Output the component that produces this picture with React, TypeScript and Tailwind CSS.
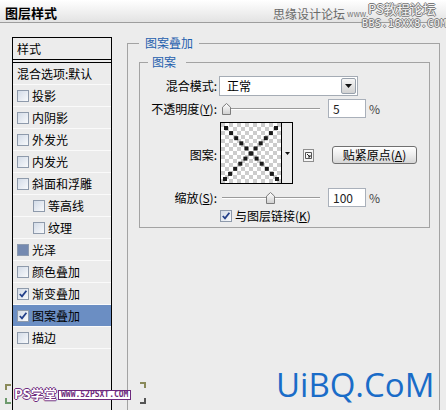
import React from 'react'

type CheckState = 'off' | 'on' | 'dark'

function Check({ state }: { state: CheckState }) {
  if (state === 'dark') {
    return <span className="block w-[12px] h-[12px] shrink-0 border border-[#8d9bb0] bg-[#7489b0]" />
  }
  return (
    <span className="relative block w-[12px] h-[12px] shrink-0 border border-[#8e9aab] bg-linear-to-br from-[#d3dce8] to-[#f8f9fb]">
      {state === 'on' && (
        <svg className="absolute left-0 top-0" width="10" height="10" viewBox="0 0 10 10">
          <path d="M1.8 5 L4 7.4 L8.4 1.8" fill="none" stroke="#23408a" strokeWidth="1.8" />
        </svg>
      )}
    </span>
  )
}

const styles: { label: string; state: CheckState; indent?: boolean; selected?: boolean }[] = [
  { label: '投影', state: 'off' },
  { label: '内阴影', state: 'off' },
  { label: '外发光', state: 'off' },
  { label: '内发光', state: 'off' },
  { label: '斜面和浮雕', state: 'off' },
  { label: '等高线', state: 'off', indent: true },
  { label: '纹理', state: 'off', indent: true },
  { label: '光泽', state: 'dark' },
  { label: '颜色叠加', state: 'off' },
  { label: '渐变叠加', state: 'on' },
  { label: '图案叠加', state: 'on', selected: true },
  { label: '描边', state: 'off' },
]

function Slider({ thumb }: { thumb: string }) {
  return (
    <div className="relative ml-[5px] w-[98px] h-[19px] shrink-0">
      <div className="absolute left-0 right-0 top-[9px] h-[2px] border-t border-[#9a9a9a] bg-white" />
      <svg className={`absolute top-[4px] ${thumb}`} width="9" height="12" viewBox="0 0 9 12">
        <defs>
          <linearGradient id="th" x1="0" y1="0" x2="0" y2="1">
            <stop offset="0" stopColor="#ffffff" />
            <stop offset="1" stopColor="#cfcfcf" />
          </linearGradient>
        </defs>
        <path d="M0.5 4.2 L4.5 0.5 L8.5 4.2 L8.5 11.5 L0.5 11.5 Z" fill="url(#th)" stroke="#7c7c7c" />
      </svg>
    </div>
  )
}

function NumBox({ value }: { value: string }) {
  return (
    <>
      <div className="ml-[8px] w-[38px] h-[19px] shrink-0 border border-[#a9b0ba] bg-white pl-[4px] flex items-center text-[#222]">{value}</div>
      <span className="ml-[3px] text-[#444]">%</span>
    </>
  )
}

function Swatch() {
  const cells = []
  for (let y = 0; y < 15; y++) {
    for (let x = 0; x < 15; x++) {
      if ((x + y) % 2 === 0) cells.push(<rect key={`c${x}-${y}`} x={x * 4} y={y * 4} width="4" height="4" fill="#cccccc" />)
    }
  }
  const dots = []
  for (let i = 0; i < 11; i++) {
    const p = 3 + i * 5.1
    dots.push(<rect key={`a${i}`} x={p} y={p} width="4" height="4" fill="#1a1a1a" />)
    dots.push(<rect key={`b${i}`} x={53 - i * 5.1} y={p} width="4" height="4" fill="#1a1a1a" />)
  }
  return (
    <svg width="60" height="60" viewBox="0 0 60 60">
      <rect width="60" height="60" fill="#ffffff" />
      {cells}
      {dots}
    </svg>
  )
}

export default function App() {
  return (
    <div className="relative w-[446px] h-[410px] overflow-hidden bg-[#ececec] font-['Noto_Sans_CJK_SC',sans-serif] text-[12px] leading-[16px] text-black">
      {/* title bar */}
      <header className="relative h-[23px] border-b border-[#9d9d9d] bg-linear-to-b from-white to-[#e3e3e3] pl-[5px] pt-[5px]">
        <span className="font-bold text-[13px] leading-[16px]">图层样式</span>
        <div className="absolute left-[273px] top-[6px] text-[#6a6a6a] leading-[16px]">思缘设计论坛</div>
        <div className="absolute left-[347px] top-[9px] text-[8px] leading-[10px] text-[#777]">www.</div>
        <div className="absolute left-[368px] top-[1px] text-[13px] leading-[15px] text-[#f4f4f4] [text-shadow:1px_0_0_#7a7a7a,-1px_0_0_#7a7a7a,0_1px_0_#7a7a7a,0_-1px_0_#7a7a7a]">PS教程论坛</div>
        <div className="absolute left-[362px] top-[18px] text-[10px] leading-[11px] tracking-[0.5px] text-[#f4f4f4] font-['DejaVu_Sans_Mono',monospace] [text-shadow:1px_0_0_#7a7a7a,-1px_0_0_#7a7a7a,0_1px_0_#7a7a7a,0_-1px_0_#7a7a7a]">BBS.16XX8.COM</div>
      </header>

      <div className="flex items-start pl-[12px]">
        {/* style list */}
        <aside className="mt-[14px] w-[100px] h-[400px] shrink-0 border-x border-black">
          <div className="h-[23px] border-y border-black pl-[4px] flex items-center">样式</div>
          <div className="mt-[2px] border-t border-black" />
          <div className="h-[22px] border-b border-[#fafafa] pl-[4px] flex items-center">混合选项:默认</div>
          {styles.map((s) => (
            <div
              key={s.label}
              className={`h-[22px] border-b border-[#fafafa] flex items-center ${s.indent ? 'pl-[20px]' : 'pl-[4px]'} ${s.selected ? 'bg-[#6b8ec3]' : ''}`}
            >
              <Check state={s.state} />
              <span className="ml-[3px]">{s.label}</span>
            </div>
          ))}
        </aside>

        {/* pattern overlay */}
        <fieldset className="ml-[15px] mt-[12px] w-[313px] h-[400px] shrink-0 border border-[#a3a3a3] pl-[11px] pr-[9px]">
          <legend className="pl-[6px] pr-[6px] text-[#1f5fae]">图案叠加</legend>
          <fieldset className="mt-[3px] border border-[#a3a3a3] pt-[6px] pb-[5px]">
            <legend className="ml-[8px] pl-[4px] pr-[10px] text-[#1f5fae]">图案</legend>

            <div className="flex h-[20px] items-center">
              <span className="w-[77px] shrink-0 text-right">混合模式:</span>
              <div className="ml-[2px] w-[139px] h-[20px] border border-[#a5acb5] bg-white flex items-center">
                <span className="pl-[7px]">正常</span>
                <span className="ml-auto mr-[1px] w-[15px] h-[16px] rounded-[2px] border border-[#98a1ac] bg-linear-to-b from-[#f6f6f6] to-[#d2d2d2] flex items-center justify-center">
                  <svg width="7" height="4" viewBox="0 0 7 4"><path d="M0 0 H7 L3.5 4 Z" fill="#111" /></svg>
                </span>
              </div>
            </div>

            <div className="mt-[3px] flex h-[19px] items-center">
              <span className="w-[77px] shrink-0 text-right">不透明度(<span className="underline">Y</span>):</span>
              <Slider thumb="left-0" />
              <NumBox value="5" />
            </div>

            <div className="mt-[4px] flex h-[62px] items-start">
              <span className="mt-[25px] w-[77px] shrink-0 text-right">图案:</span>
              <div className="ml-[3px] w-[73px] h-[62px] shrink-0 border border-black flex">
                <Swatch />
                <div className="flex-1 border-l border-black flex items-center justify-center">
                  <svg width="5" height="3" viewBox="0 0 5 3"><path d="M0 0 H5 L2.5 3 Z" fill="#111" /></svg>
                </div>
              </div>
              <span className="mt-[27px] ml-[10px] w-[11px] h-[13px] shrink-0 border border-[#8e8e8e] bg-[#f6f6f6] flex items-center justify-center">
                <svg width="7" height="7" viewBox="0 0 7 7">
                  <path d="M0.5 0.5 H6.5 V6.5 H0.5 Z" fill="none" stroke="#555" />
                  <path d="M2 2 L5 5 M5 3 V5 H3" fill="none" stroke="#222" />
                </svg>
              </span>
              <button className="mt-[24px] ml-[18px] w-[85px] h-[18px] shrink-0 rounded-[3px] border border-[#707070] bg-linear-to-b from-white via-[#ededed] to-[#d6d6d6] flex items-center justify-center text-[12px] leading-[16px]">
                贴紧原点(<span className="underline">A</span>)
              </button>
            </div>

            <div className="mt-[4px] flex h-[19px] items-center">
              <span className="w-[77px] shrink-0 text-right">缩放(<span className="underline">S</span>):</span>
              <Slider thumb="left-[44px]" />
              <NumBox value="100" />
            </div>

            <div className="mt-[3px] flex h-[12px] items-center pl-[80px]">
              <Check state="on" />
              <span className="ml-[3px]">与图层链接(<span className="underline">K</span>)</span>
            </div>
          </fieldset>
        </fieldset>
      </div>

      {/* watermarks */}
      <span className="absolute left-[5px] top-[384px] w-[6px] h-[6px] border-l-2 border-t-2 border-[#8a8a5a]" />
      <span className="absolute left-[5px] top-[398px] w-[6px] h-[6px] border-l-2 border-b-2 border-[#6d9a6d]" />
      <span className="absolute left-[140px] top-[382px] w-[6px] h-[6px] border-r-2 border-t-2 border-[#8a8a5a]" />
      <span className="absolute left-[140px] top-[398px] w-[6px] h-[6px] border-r-2 border-b-2 border-[#555]" />
      <div className="absolute left-[14px] top-[386px] text-[13px] leading-[16px] text-white font-bold [text-shadow:1px_0_0_#6d2a7d,-1px_0_0_#6d2a7d,0_1px_0_#6d2a7d,0_-1px_0_#6d2a7d]">PS学堂</div>
      <div className="absolute left-[58px] top-[390px] h-[10px] px-[2px] border border-[#6d2a7d] bg-white text-[8px] leading-[8px] font-['DejaVu_Sans_Mono',monospace] font-bold text-[#6d2a7d]">WWW.52PSXT.COM</div>
      <div className="absolute left-[276px] top-[368px] text-[33px] leading-none text-[#1a6cc8] font-['Open_Sans',sans-serif]">UiBQ.CoM</div>
    </div>
  )
}
